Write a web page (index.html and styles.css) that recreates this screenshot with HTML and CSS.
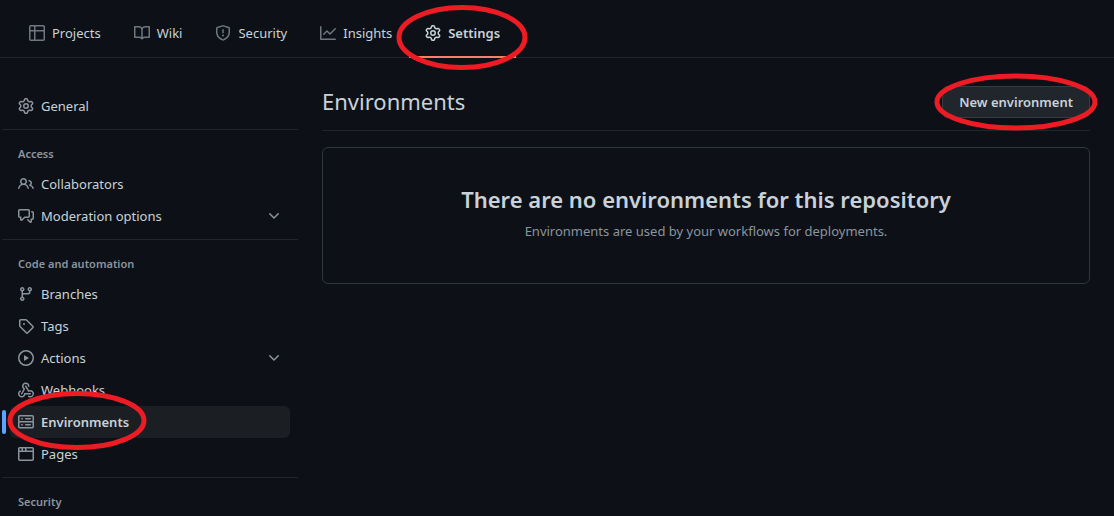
FILE: index.html
```html
<!DOCTYPE html>
<html lang="en">
<head>
<meta charset="utf-8">
<title>Environments</title>
<link rel="stylesheet" href="styles.css">
</head>
<body>
<svg class="sprite" aria-hidden="true">
  <symbol id="gear" viewBox="0 0 16 16"><path d="M8 0a8.2 8.2 0 0 1 .701.031C9.444.095 9.99.645 10.16 1.29l.288 1.107c.018.066.079.158.212.224.231.114.454.243.668.386.123.082.233.09.299.071l1.103-.303c.644-.176 1.392.021 1.82.63.27.385.506.792.704 1.218.315.675.111 1.422-.364 1.891l-.814.806c-.049.048-.098.147-.088.294.016.257.016.515 0 .772-.01.147.038.246.088.294l.814.806c.475.469.679 1.216.364 1.891a7.977 7.977 0 0 1-.704 1.217c-.428.61-1.176.807-1.82.63l-1.102-.302c-.067-.019-.177-.011-.3.071a5.909 5.909 0 0 1-.668.386c-.133.066-.194.158-.211.224l-.29 1.106c-.168.646-.715 1.196-1.458 1.26a8.006 8.006 0 0 1-1.402 0c-.743-.064-1.289-.614-1.458-1.26l-.289-1.106c-.018-.066-.079-.158-.212-.224a5.738 5.738 0 0 1-.668-.386c-.123-.082-.233-.09-.299-.071l-1.103.303c-.644.176-1.392-.021-1.82-.63a8.12 8.12 0 0 1-.704-1.218c-.315-.675-.111-1.422.363-1.891l.815-.806c.05-.048.098-.147.088-.294a6.214 6.214 0 0 1 0-.772c.01-.147-.038-.246-.088-.294l-.815-.806C.635 6.045.431 5.298.746 4.623a7.92 7.92 0 0 1 .704-1.217c.428-.61 1.176-.807 1.82-.63l1.102.302c.067.019.177.011.3-.071.214-.143.437-.272.668-.386.133-.066.194-.158.211-.224l.29-1.106C6.009.645 6.556.095 7.299.03 7.53.01 7.764 0 8 0Zm-.571 1.525c-.036.003-.108.036-.137.146l-.289 1.105c-.147.561-.549.967-.998 1.189-.173.086-.34.183-.5.29-.417.278-.97.423-1.529.27l-1.103-.303c-.109-.03-.175.016-.195.045-.22.312-.412.644-.573.99-.014.031-.021.11.059.19l.815.806c.411.406.562.957.53 1.456a4.709 4.709 0 0 0 0 .582c.032.499-.119 1.05-.53 1.456l-.815.806c-.081.08-.073.159-.059.19.162.346.353.677.573.989.02.03.085.076.195.046l1.102-.303c.56-.153 1.113-.008 1.53.27.161.107.328.204.501.29.447.222.85.629.997 1.189l.289 1.105c.029.109.101.143.137.146a6.6 6.6 0 0 0 1.142 0c.036-.003.108-.036.137-.146l.289-1.105c.147-.561.549-.967.998-1.189.173-.086.34-.183.5-.29.417-.278.97-.423 1.529-.27l1.103.303c.109.029.175-.016.195-.045.22-.313.411-.644.573-.99.014-.031.021-.11-.059-.19l-.815-.806c-.411-.406-.562-.957-.53-1.456a4.709 4.709 0 0 0 0-.582c-.032-.499.119-1.05.53-1.456l.815-.806c.081-.08.073-.159.059-.19a6.464 6.464 0 0 0-.573-.989c-.02-.03-.085-.076-.195-.046l-1.102.303c-.56.153-1.113.008-1.53-.27a4.44 4.44 0 0 0-.501-.29c-.447-.222-.85-.629-.997-1.189l-.289-1.105c-.029-.11-.101-.143-.137-.146a6.6 6.6 0 0 0-1.142 0ZM11 8a3 3 0 1 1-6 0 3 3 0 0 1 6 0ZM9.5 8a1.5 1.5 0 1 0-3.001.001A1.5 1.5 0 0 0 9.5 8Z"/></symbol>
  <symbol id="table" viewBox="0 0 16 16"><path d="M0 1.75C0 .784.784 0 1.75 0h12.5C15.216 0 16 .784 16 1.75v12.5A1.75 1.75 0 0 1 14.25 16H1.75A1.75 1.75 0 0 1 0 14.25ZM6.5 6.5v8h7.75a.25.25 0 0 0 .25-.25V6.5Zm8-1.5V1.75a.25.25 0 0 0-.25-.25H6.5V5Zm-13 1.5v7.75c0 .138.112.25.25.25H5v-8ZM5 5V1.5H1.75a.25.25 0 0 0-.25.25V5Z"/></symbol>
  <symbol id="book" viewBox="0 0 16 16"><path d="M0 1.75A.75.75 0 0 1 .75 1h4.253c1.227 0 2.317.59 3 1.501A3.743 3.743 0 0 1 11.006 1h4.245a.75.75 0 0 1 .75.75v10.5a.75.75 0 0 1-.75.75h-4.507a2.25 2.25 0 0 0-1.591.659l-.622.621a.75.75 0 0 1-1.06 0l-.622-.621A2.25 2.25 0 0 0 5.258 13H.75a.75.75 0 0 1-.75-.75Zm7.251 10.324.004-5.073-.002-2.253A2.25 2.25 0 0 0 5.003 2.5H1.5v9h3.757a3.75 3.75 0 0 1 1.994.574ZM8.755 4.75l-.004 7.322a3.752 3.752 0 0 1 1.992-.572H14.5v-9h-3.495a2.25 2.25 0 0 0-2.25 2.25Z"/></symbol>
  <symbol id="shield" viewBox="0 0 16 16"><path d="M7.467.133a1.748 1.748 0 0 1 1.066 0l5.25 1.68A1.75 1.75 0 0 1 15 3.48V7c0 1.566-.32 3.182-1.303 4.682-.983 1.498-2.585 2.813-5.032 3.855a1.697 1.697 0 0 1-1.33 0c-2.447-1.042-4.049-2.357-5.032-3.855C1.32 10.182 1 8.566 1 7V3.48a1.75 1.75 0 0 1 1.217-1.667Zm.61 1.429a.25.25 0 0 0-.153 0l-5.25 1.68a.25.25 0 0 0-.174.238V7c0 1.358.275 2.666 1.057 3.86.784 1.194 2.121 2.34 4.366 3.297a.196.196 0 0 0 .154 0c2.245-.956 3.582-2.104 4.366-3.298C13.225 9.666 13.5 8.36 13.5 7V3.48a.251.251 0 0 0-.174-.237ZM8.75 4.75v3a.75.75 0 0 1-1.5 0v-3a.75.75 0 0 1 1.5 0ZM9 10.5a1 1 0 1 1-2 0 1 1 0 0 1 2 0Z"/></symbol>
  <symbol id="graph" viewBox="0 0 16 16"><path d="M1.5 1.75V13.5h13.75a.75.75 0 0 1 0 1.5H.75a.75.75 0 0 1-.75-.75V1.75a.75.75 0 0 1 1.5 0Zm14.28 2.53-5.25 5.25a.75.75 0 0 1-1.06 0L7 7.06 4.28 9.78a.75.75 0 0 1-1.06-1.06l3.25-3.25a.75.75 0 0 1 1.06 0L10 7.94l4.72-4.72a.75.75 0 0 1 1.06 1.06Z"/></symbol>
  <symbol id="people" viewBox="0 0 16 16"><path d="M2 5.5a3.5 3.5 0 1 1 5.898 2.549 5.508 5.508 0 0 1 3.034 4.084.75.75 0 1 1-1.482.235 4 4 0 0 0-7.9 0 .75.75 0 0 1-1.482-.236A5.507 5.507 0 0 1 3.102 8.05 3.493 3.493 0 0 1 2 5.5ZM11 4a3.001 3.001 0 0 1 2.22 5.018 5.01 5.01 0 0 1 2.56 3.012.749.749 0 0 1-.885.954.752.752 0 0 1-.549-.514 3.507 3.507 0 0 0-2.522-2.372.75.75 0 0 1-.574-.73v-.352a.75.75 0 0 1 .416-.672A1.5 1.5 0 0 0 11 5.5.75.75 0 0 1 11 4Zm-5.5-.5a2 2 0 1 0-.001 3.999A2 2 0 0 0 5.5 3.5Z"/></symbol>
  <symbol id="discussion" viewBox="0 0 16 16"><path d="M1.75 1h8.5c.966 0 1.75.784 1.75 1.75v5.5A1.75 1.75 0 0 1 10.25 10H7.061l-2.574 2.573A1.458 1.458 0 0 1 2 11.543V10h-.25A1.75 1.75 0 0 1 0 8.25v-5.5C0 1.784.784 1 1.75 1ZM1.5 2.75v5.5c0 .138.112.25.25.25h1a.75.75 0 0 1 .75.75v2.19l2.72-2.72a.749.749 0 0 1 .53-.22h3.5a.25.25 0 0 0 .25-.25v-5.5a.25.25 0 0 0-.25-.25h-8.5a.25.25 0 0 0-.25.25Zm13 2a.25.25 0 0 0-.25-.25h-.5a.75.75 0 0 1 0-1.5h.5c.966 0 1.75.784 1.75 1.75v5.5A1.75 1.75 0 0 1 14.25 12H14v1.543a1.458 1.458 0 0 1-2.487 1.03L9.22 12.28a.749.749 0 0 1 1.06-1.06l2.22 2.22v-2.19a.75.75 0 0 1 .75-.75h1a.25.25 0 0 0 .25-.25Z"/></symbol>
  <symbol id="branch" viewBox="0 0 16 16"><path d="M9.5 3.25a2.25 2.25 0 1 1 3 2.122V6A2.5 2.5 0 0 1 10 8.5H6a1 1 0 0 0-1 1v1.128a2.251 2.251 0 1 1-1.5 0V5.372a2.25 2.25 0 1 1 1.5 0v1.836A2.493 2.493 0 0 1 6 7h4a1 1 0 0 0 1-1v-.628A2.25 2.25 0 0 1 9.5 3.25Zm-6 0a.75.75 0 1 0 1.5 0 .75.75 0 0 0-1.5 0Zm8.25-.75a.75.75 0 1 0 0 1.5.75.75 0 0 0 0-1.5ZM4.25 12a.75.75 0 1 0 0 1.5.75.75 0 0 0 0-1.5Z"/></symbol>
  <symbol id="tag" viewBox="0 0 16 16"><path d="M1 7.775V2.75C1 1.784 1.784 1 2.75 1h5.025c.464 0 .91.184 1.238.513l6.25 6.25a1.75 1.75 0 0 1 0 2.474l-5.026 5.026a1.75 1.75 0 0 1-2.474 0l-6.25-6.25A1.752 1.752 0 0 1 1 7.775Zm1.5 0c0 .066.026.13.073.177l6.25 6.25a.25.25 0 0 0 .354 0l5.025-5.025a.25.25 0 0 0 0-.354l-6.25-6.25a.25.25 0 0 0-.177-.073H2.75a.25.25 0 0 0-.25.25ZM6 5a1 1 0 1 1 0 2 1 1 0 0 1 0-2Z"/></symbol>
  <symbol id="play" viewBox="0 0 16 16"><path d="M8 0a8 8 0 1 1 0 16A8 8 0 0 1 8 0ZM1.5 8a6.5 6.5 0 1 0 13 0 6.5 6.5 0 0 0-13 0Zm4.879-2.773 4.264 2.559a.25.25 0 0 1 0 .428l-4.264 2.559A.25.25 0 0 1 6 10.559V5.442a.25.25 0 0 1 .379-.215Z"/></symbol>
  <symbol id="webhook" viewBox="0 0 16 16"><path d="M5.5 4.25a2.25 2.25 0 0 1 4.5 0 .75.75 0 0 0 1.5 0 3.75 3.75 0 1 0-6.14 2.889l-2.272 4.258a.75.75 0 0 0 1.324.706L7 7.25a.75.75 0 0 0-.309-1.015A2.25 2.25 0 0 1 5.5 4.25Z"/><path d="M7.364 3.607a.75.75 0 0 1 1.03.257l2.608 4.349a3.75 3.75 0 1 1-.628 6.785.75.75 0 0 1 .752-1.299 2.25 2.25 0 1 0-.033-3.88.75.75 0 0 1-1.03-.256L7.107 4.636a.75.75 0 0 1 .257-1.03Z"/><path d="M2.9 8.776A.75.75 0 0 1 2.625 9.8 2.25 2.25 0 1 0 6 11.75a.75.75 0 0 1 .75-.751h5.5a.75.75 0 0 1 0 1.5H7.425a3.751 3.751 0 1 1-5.55-3.998.75.75 0 0 1 1.024.274Z"/></symbol>
  <symbol id="server" viewBox="0 0 16 16"><path d="M1.75 1h12.5c.966 0 1.75.784 1.75 1.75v4c0 .372-.116.717-.314 1 .198.283.314.628.314 1v4a1.75 1.75 0 0 1-1.75 1.75H1.75A1.75 1.75 0 0 1 0 12.75v-4c0-.358.109-.707.314-1a1.739 1.739 0 0 1-.314-1v-4C0 1.784.784 1 1.75 1ZM1.5 2.75v4c0 .138.112.25.25.25h12.5a.25.25 0 0 0 .25-.25v-4a.25.25 0 0 0-.25-.25H1.75a.25.25 0 0 0-.25.25Zm.25 5.75a.25.25 0 0 0-.25.25v4c0 .138.112.25.25.25h12.5a.25.25 0 0 0 .25-.25v-4a.25.25 0 0 0-.25-.25ZM7 4.75A.75.75 0 0 1 7.75 4h4.5a.75.75 0 0 1 0 1.5h-4.5A.75.75 0 0 1 7 4.75ZM7.75 10h4.5a.75.75 0 0 1 0 1.5h-4.5a.75.75 0 0 1 0-1.5ZM3 4.75A.75.75 0 0 1 3.75 4h.5a.75.75 0 0 1 0 1.5h-.5A.75.75 0 0 1 3 4.75ZM3.75 10h.5a.75.75 0 0 1 0 1.5h-.5a.75.75 0 0 1 0-1.5Z"/></symbol>
  <symbol id="browser" viewBox="0 0 16 16"><path d="M0 2.75C0 1.784.784 1 1.75 1h12.5c.966 0 1.75.784 1.75 1.75v10.5A1.75 1.75 0 0 1 14.25 15H1.75A1.75 1.75 0 0 1 0 13.25ZM14.5 6h-13v7.25c0 .138.112.25.25.25h12.5a.25.25 0 0 0 .25-.25Zm-6-3.5v2h6V2.75a.25.25 0 0 0-.25-.25ZM5 2.5v2h2v-2Zm-3.25 0a.25.25 0 0 0-.25.25V4.500h2v-2Z"/></symbol>
  <symbol id="chevron" viewBox="0 0 16 16"><path d="M12.780 5.220a.749.749 0 0 1 0 1.060l-4.250 4.250a.749.749 0 0 1-1.060 0L3.220 6.280a.749.749 0 1 1 1.060-1.060L8 8.939l3.720-3.719a.749.749 0 0 1 1.060 0Z"/></symbol>
</svg>

<nav class="tabs" aria-label="Repository">
  <a class="tab" href="#projects"><svg class="icon"><use href="#table"/></svg>Projects</a>
  <a class="tab" href="#wiki"><svg class="icon"><use href="#book"/></svg>Wiki</a>
  <a class="tab" href="#security"><svg class="icon"><use href="#shield"/></svg>Security</a>
  <a class="tab" href="#insights"><svg class="icon"><use href="#graph"/></svg>Insights</a>
  <a class="tab tab-current" href="#settings" aria-current="page"><svg class="icon"><use href="#gear"/></svg>Settings<svg class="ring ring-tab" aria-hidden="true"><ellipse cx="50%" cy="50%" rx="63" ry="30"/></svg></a>
</nav>

<div class="layout">
  <nav class="sidebar" aria-label="Settings">
    <div class="group">
      <a class="item" href="#general"><svg class="icon"><use href="#gear"/></svg>General</a>
    </div>
    <div class="group">
      <h2 class="group-title">Access</h2>
      <a class="item" href="#collaborators"><svg class="icon"><use href="#people"/></svg>Collaborators</a>
      <button class="item" type="button" aria-expanded="false"><svg class="icon"><use href="#discussion"/></svg>Moderation options<svg class="icon chevron"><use href="#chevron"/></svg></button>
    </div>
    <div class="group">
      <h2 class="group-title">Code and automation</h2>
      <a class="item" href="#branches"><svg class="icon"><use href="#branch"/></svg>Branches</a>
      <a class="item" href="#tags"><svg class="icon"><use href="#tag"/></svg>Tags</a>
      <button class="item" type="button" aria-expanded="false"><svg class="icon"><use href="#play"/></svg>Actions<svg class="icon chevron"><use href="#chevron"/></svg></button>
      <a class="item" href="#webhooks"><svg class="icon"><use href="#webhook"/></svg>Webhooks</a>
      <a class="item item-current" href="#environments" aria-current="page"><svg class="icon"><use href="#server"/></svg>Environments<svg class="ring ring-item" aria-hidden="true"><ellipse cx="50%" cy="50%" rx="67" ry="27"/></svg></a>
      <a class="item" href="#pages"><svg class="icon"><use href="#browser"/></svg>Pages</a>
    </div>
    <div class="group">
      <h2 class="group-title">Security</h2>
    </div>
  </nav>

  <main class="content">
    <header class="page-head">
      <h1 class="page-title">Environments</h1>
      <button class="new-button" type="button">New environment<svg class="ring ring-button" aria-hidden="true"><ellipse cx="50%" cy="50%" rx="79" ry="26"/></svg></button>
    </header>
    <section class="blank">
      <h2 class="blank-title">There are no environments for this repository</h2>
      <p class="blank-text">Environments are used by your workflows for deployments.</p>
    </section>
  </main>
</div>
</body>
</html>
```

FILE: styles.css
```css
* {
  box-sizing: border-box;
}

html {
  background: #0d1117;
}

body {
  margin: 0;
  color: #c9d1d9;
  font-family: "Noto Sans", "Open Sans", sans-serif;
  font-size: 13px;
  line-height: 20px;
}

h1, h2, p {
  margin: 0;
}

.sprite {
  position: absolute;
  width: 0;
  height: 0;
}

.icon {
  flex: none;
  width: 16px;
  height: 16px;
  fill: #8b949e;
}

.tabs {
  display: flex;
  gap: 1px;
  padding: 9px 13px 0;
  border-bottom: 1px solid #21262d;
}

.tab {
  position: relative;
  display: flex;
  align-items: center;
  gap: 7px;
  height: 48px;
  padding: 0 16px;
  color: inherit;
  text-decoration: none;
}

.tab .icon {
  fill: #6e7681;
}

.tab-current {
  font-weight: 600;
}

.tab-current::after {
  content: "";
  position: absolute;
  right: 0;
  bottom: -1px;
  left: 0;
  height: 2px;
  background: #f78166;
}

.tab-current .icon {
  fill: #c9d1d9;
}

.ring {
  position: absolute;
  z-index: 2;
  overflow: visible;
  fill: none;
  stroke: #ed1c24;
  stroke-width: 5;
  pointer-events: none;
}

.ring-tab {
  top: 0;
  left: 0;
  width: 106px;
  height: 57px;
}

.layout {
  display: flex;
  gap: 24px;
  padding: 24px 24px 0 2px;
}

.sidebar {
  flex: none;
  width: 296px;
}

.group {
  padding: 0 8px 7px;
}

.group + .group {
  padding-top: 8px;
  border-top: 1px solid #21262d;
}

.group:first-child {
  padding-top: 8px;
}

.group:last-child {
  padding-bottom: 0;
}

.group-title {
  padding: 7px 8px 5px;
  color: #8b949e;
  font-size: 11px;
  font-weight: 600;
  line-height: 18px;
}

.item {
  position: relative;
  display: flex;
  align-items: center;
  gap: 7px;
  width: 100%;
  height: 32px;
  padding: 0 8px;
  border: 0;
  border-radius: 6px;
  background: none;
  color: inherit;
  font: inherit;
  text-align: left;
  text-decoration: none;
}

.chevron {
  margin-left: auto;
}

.item-current {
  background: #1b1f23;
  font-weight: 600;
}

.item-current::before {
  content: "";
  position: absolute;
  top: 4px;
  left: -8px;
  width: 4px;
  height: 24px;
  border-radius: 6px;
  background: #58a6ff;
}

.ring-item {
  top: 0;
  left: 0;
  width: 134px;
  height: 29px;
}

.content {
  flex: 1;
  min-width: 0;
}

.page-head {
  display: flex;
  align-items: flex-start;
  justify-content: space-between;
  height: 49px;
  margin-bottom: 16px;
  border-bottom: 1px solid #21262d;
}

.page-title {
  font-size: 22px;
  font-weight: 400;
  line-height: 38px;
}

.new-button {
  position: relative;
  height: 32px;
  margin-top: 4px;
  padding: 0 16px;
  border: 1px solid #363b42;
  border-radius: 6px;
  background: #21262d;
  color: inherit;
  font: inherit;
  font-weight: 600;
}

.ring-button {
  top: 0;
  left: 0;
  width: 100%;
  height: 100%;
}

.blank {
  padding: 32px;
  border: 1px solid #30363d;
  border-radius: 6px;
  text-align: center;
}

.blank-title {
  margin-bottom: 3px;
  font-size: 22px;
  font-weight: 600;
  line-height: 38px;
}

.blank-text {
  margin-bottom: 10px;
  color: #8b949e;
}
```
